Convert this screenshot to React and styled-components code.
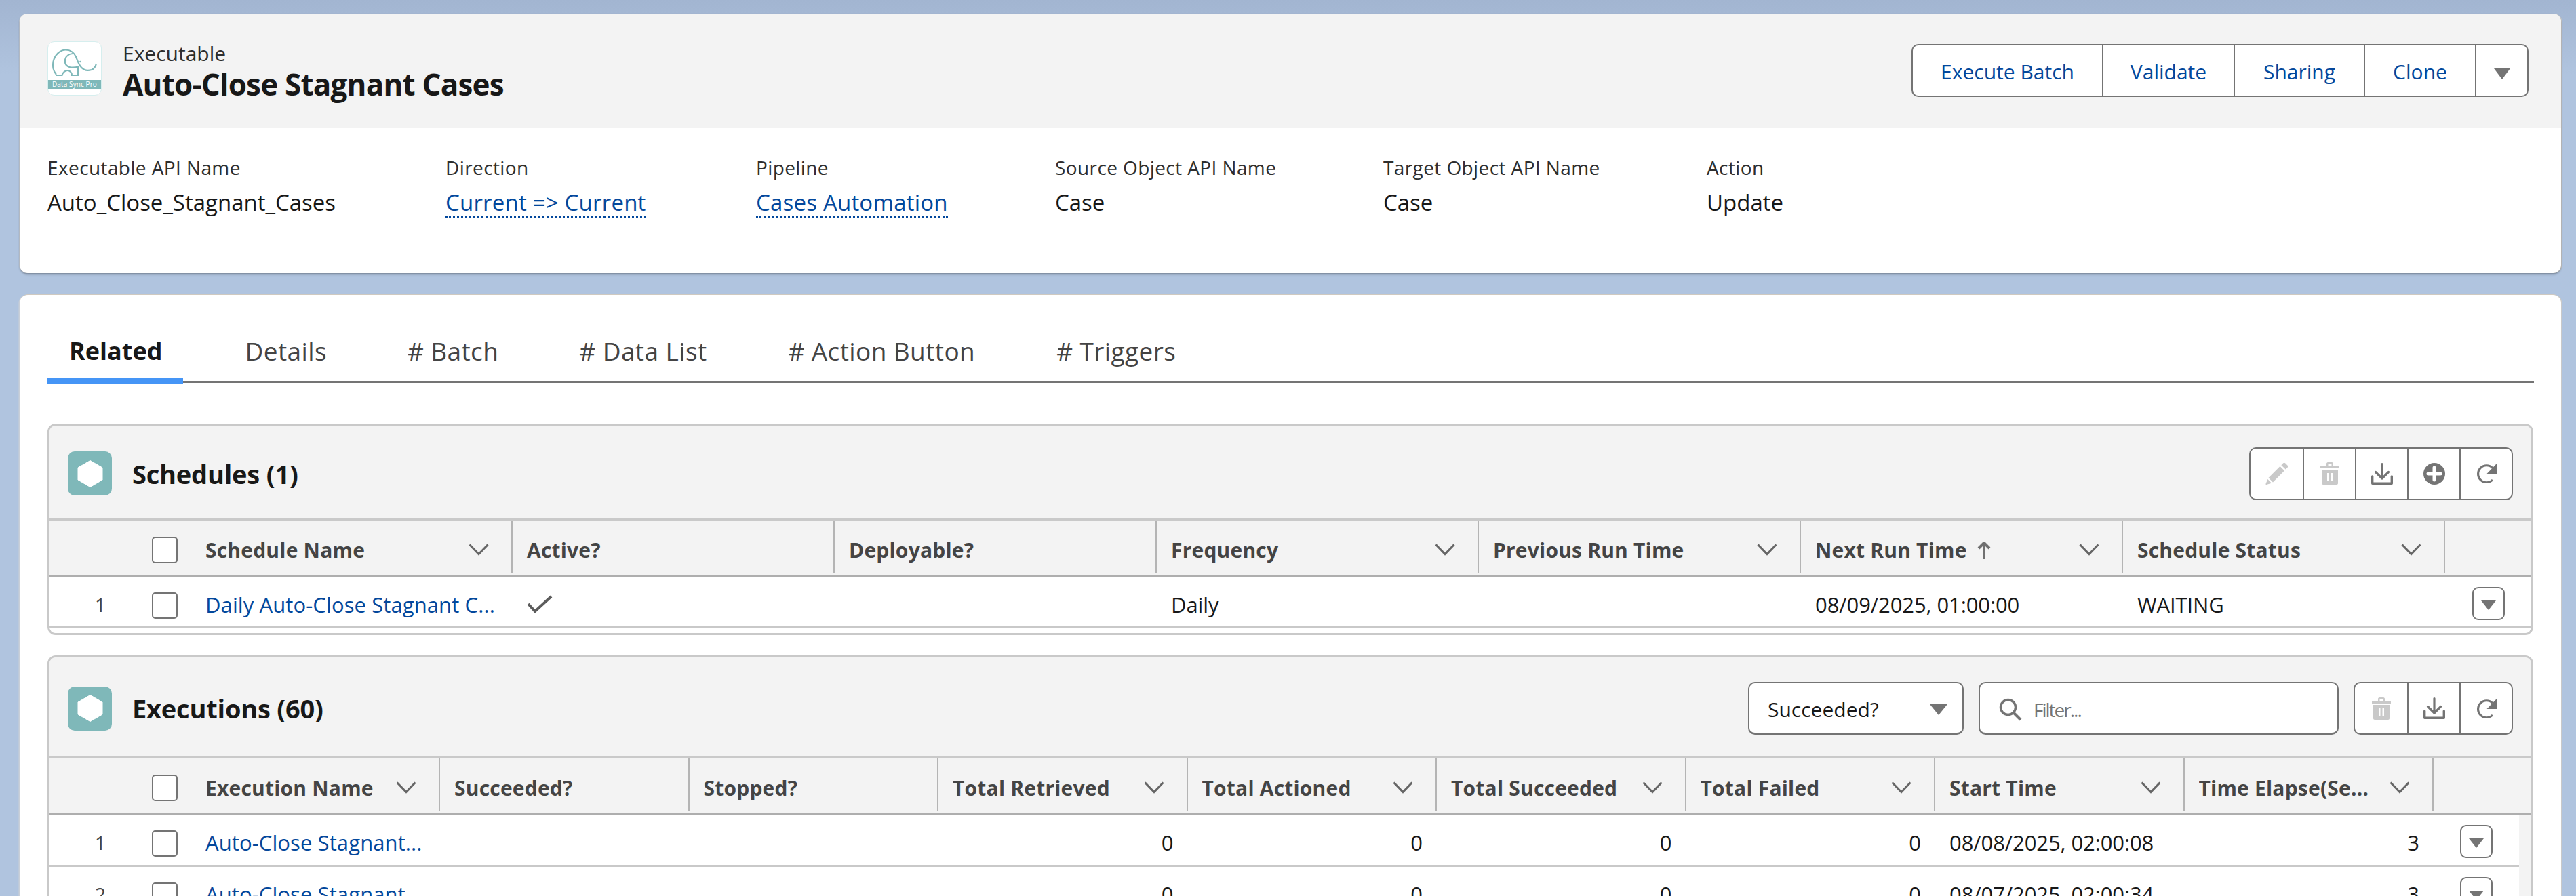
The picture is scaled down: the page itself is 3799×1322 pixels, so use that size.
import React from "react";
import styled, { createGlobalStyle } from "styled-components";

const Global = createGlobalStyle`
  html, body { margin: 0; height: 100%; overflow: hidden; }
  body {
    font-family: "Open Sans", "Noto Sans", "Liberation Sans", sans-serif;
    color: #181818;
    background: linear-gradient(180deg, #a2b5d1 0, #b0c4df 110px, #b0c4df 100%);
  }
  * { box-sizing: border-box; }
`;

const Page = styled.div`
  display: flex; flex-direction: column; gap: 32px;
  padding: 20px 22px 0 29px; height: 1322px; overflow: hidden;
`;
const HeaderCard = styled.section`
  height: 383px; flex: none; background: #fff; border-radius: 12px; overflow: hidden;
  box-shadow: 0 2px 3px rgba(0,0,0,.3), 1.5px 0 0 #c9c9c9, -1px 0 0 #c9cfd8;
`;
const Highlights = styled.div`
  height: 169px; background: #f3f3f3; display: flex; align-items: center;
  justify-content: space-between; padding: 0 48px 2px 41px;
`;
const TitleGroup = styled.div` display: flex; align-items: flex-start; gap: 31px; `;
const LogoBox = styled.div`
  width: 80px; height: 80px; margin-top: 2px; background: #fff; border: 1px solid #d6eeee; border-radius: 10px;
  overflow: hidden; position: relative; flex: none;
`;
const LogoBand = styled.div`
  position: absolute; left: 0; right: 0; top: 56px; height: 13px; background: #7fb8b9; color: #fff;
  font-size: 10px; line-height: 13px; text-align: center; letter-spacing: .1px; font-weight: 500;
`;
const Eyebrow = styled.div` font-size: 30px; line-height: 40px; color: #2e2e2e; `;
const Title = styled.h1` margin: 0; font-size: 44px; line-height: 50px; font-weight: 700; letter-spacing: -.8px; `;
const BtnGroup = styled.div`
  display: flex; height: 78px; border: 2px solid #747474; border-radius: 10px; background: #fff; overflow: hidden;
`;
const GroupBtn = styled.div`
  width: ${p => p.$w}px; flex: none; display: flex; align-items: center; justify-content: center;
  color: #03489c; font-size: 30px; padding-top: 4px;
  & + & { border-left: 2px solid #747474; }
`;
const Caret = styled.span`
  display: inline-block; width: 0; height: 0; flex: none; margin-top: ${p => p.$mt || 0}px;
  border-left: ${p => p.$w / 2}px solid transparent; border-right: ${p => p.$w / 2}px solid transparent;
  border-top: ${p => p.$h}px solid #747474;
`;
const Fields = styled.div` display: flex; padding: 38px 0 0 41px; `;
const Field = styled.div` width: ${p => p.$w}px; flex: none; `;
const FieldLabel = styled.div` font-size: 28px; line-height: 40px; color: #2e2e2e; letter-spacing: .4px; `;
const FieldValue = styled.div` font-size: 33px; line-height: 64px; `;
const FieldLink = styled.span`
  display: inline-block; line-height: 38px; color: #03489c; border-bottom: 3px dotted #03489c; letter-spacing: .2px;
`;
const MainCard = styled.section`
  flex: 1; background: #fff; border-radius: 12px 12px 0 0; padding: 40px 41px 0; min-height: 0; overflow: hidden;
  box-shadow: 0 -1px 0 #cfc9c0, -1.5px 0 0 #c9cfd8, 1.5px 0 0 #c9c9c9;
`;
const Tabs = styled.div` display: flex; height: 90px; border-bottom: 3px solid #747474; margin-right: -1px; `;
const Tab = styled.div`
  height: 91px; padding: 0 31px 0 32px; margin-right: ${p => p.$gap}px; flex: none;
  font-size: ${p => p.$active ? 36 : 37}px; line-height: 86px; letter-spacing: ${p => p.$active ? 0 : .4}px;
  font-weight: ${p => p.$active ? 700 : 400}; color: ${p => p.$active ? "#181818" : "#444"};
  border-bottom: ${p => p.$active ? "8px solid #4595f6" : "none"};
`;
const Panel = styled.div`
  border: 3px solid #c9c9c9; border-radius: 12px; background: #f3f3f3; overflow: hidden; margin-top: ${p => p.$top}px;
  width: 3666px;
`;
const PanelHead = styled.div`
  height: ${p => p.$h}px; background: #f3f3f3; border-bottom: 3px solid #c9c9c9;
  display: flex; align-items: center; justify-content: space-between; padding: 4px 27px 0 27px;
`;
const PanelTitle = styled.div` display: flex; align-items: center; gap: 30px; `;
const TileIcon = styled.div`
  width: 65px; height: 65px; border-radius: 10px; background: #7fb8b9; display: flex; align-items: center; justify-content: center;
`;
const PanelName = styled.h2` margin: 0; font-size: 38px; font-weight: 700; letter-spacing: -.2px; `;
const Tools = styled.div` display: flex; gap: 22px; align-items: center; `;
const IconBtn = styled.div`
  width: ${p => p.$w || 77}px; flex: none; display: flex; align-items: center; justify-content: center;
  & + & { border-left: 2px solid #747474; }
`;
const SelectBox = styled.div`
  width: 318px; height: 78px; border: 2px solid #747474; border-bottom-width: 3px; border-radius: 10px; background: #fff; display: flex;
  align-items: center; justify-content: space-between; padding: 4px 22px 0 27px; font-size: 30px;
`;
const FilterBox = styled.div`
  width: 531px; height: 78px; border: 2px solid #747474; border-bottom-width: 3px; border-radius: 10px; background: #fff; display: flex;
  align-items: center; gap: 17px; padding: 4px 0 0 28px; font-size: 28px; color: #747474; letter-spacing: -2px;
`;
const Row = styled.div`
  display: grid; grid-template-columns: ${p => p.$cols}; align-items: stretch;
  width: ${p => p.$width || "auto"};
`;
const HeadRow = styled(Row)`
  height: 83px; background: #f3f3f3; border-bottom: 3px solid #aeaeae;
`;
const BodyRow = styled(Row)`
  height: ${p => p.$h}px; background: #fff; border-bottom: 3px solid #c9c9c9;
`;
const Th = styled.div`
  display: flex; align-items: center; justify-content: space-between; padding: 9px 33px 0 21px; min-width: 0;
  font-size: 30px; font-weight: 700; color: #444; white-space: nowrap; letter-spacing: .2px;
  &:not(:last-child) { border-right: 2px solid #b4b4b4; margin-bottom: 3px; }
`;
const FirstTh = styled(Th)` padding-left: 0; justify-content: flex-start; `;
const NumBox = styled.div`
  width: 151px; flex: none; text-align: right; padding-right: 68px; font-size: 28px; color: #444;
`;
const Checkbox = styled.span`
  width: 38px; height: 39px; border: 2px solid #747474; border-radius: 5px; background: #fff; flex: none; display: block; margin: ${p => p.$mt || 0}px 41px 0 0;
`;
const ThLabel = styled.span` flex: 1; overflow: hidden; display: flex; align-items: center; gap: 15px; `;
const Td = styled.div`
  display: flex; align-items: center; padding: 8px 21px 0; font-size: 31px; letter-spacing: -.1px; min-width: 0;
  justify-content: ${p => p.$right ? "flex-end" : "flex-start"}; white-space: nowrap;
`;
const FirstTd = styled(Td)` padding-left: 0; `;
const RowLink = styled.span` color: #03489c; letter-spacing: .1px; `;
const MenuBtn = styled.div`
  width: 48px; height: 49px; border: 2px solid #747474; border-radius: 9px; background: #fff;
  display: flex; align-items: center; justify-content: center; padding-top: 5px;
`;
const ActionTd = styled.div` display: flex; align-items: center; justify-content: flex-end; padding: 6px ${p => p.$pad}px 0 0; `;
const Tail = styled.div` height: 7px; background: #fff; `;
const Chevron = () => (
  <svg width="30" height="18" viewBox="0 0 30 18" fill="none" stroke="#666" strokeWidth="3"><path d="M1.500 1.500 15 15.500 28.500 1.500" /></svg>
);
const Hex = () => (
  <svg width="38" height="40" viewBox="0 0 38 40"><path d="M19 0.5 37 11v18L19 39.5 1 29V11z" fill="#fff" stroke="#fff" strokeLinejoin="round" /></svg>
);
const Pencil = () => (
  <svg width="34" height="33" viewBox="0 0 34 33" fill="#c9c9c9"><path d="M26 1.5c1-1 2.4-1 3.4 0l3 3c1 1 1 2.400 0 3.400l-2.700 2.700-6.400-6.400zM21.500 5.900l6.500 6.500L11 29.500 4.500 23zM3.300 25 9 30.700 1.500 33c-.7 0-1.300-.6-1-1.300z" /></svg>
);
const Trash = ({ w = 28, h = 33 }) => (
  <svg width={w} height={h} viewBox="0 0 28 33" fill="#c9c9c9" fillRule="evenodd"><path d="M11 0h6c1 0 2 1 2 2v3h8c.6 0 1 .4 1 1v3H0V6c0-.6.4-1 1-1h8V2c0-1 1-2 2-2zm.5 2.500V5h5V2.500zM2 11h24v20c0 1-1 2-2 2H4c-1 0-2-1-2-2zm8 5v12h2.500V16zm5.500 0v12H18V16z" /></svg>
);
const Download = () => (
  <svg width="32" height="32" viewBox="0 0 32 32" fill="none" stroke="#747474" strokeWidth="3.200" strokeLinecap="round" strokeLinejoin="round">
    <path d="M16 1.600V23M6.500 13.500 16 23l9.500-9.500" />
    <path d="M1.700 20v10.300h28.600V20" strokeWidth="3.400" />
  </svg>
);
const Plus = () => (
  <svg width="32" height="32" viewBox="0 0 32 32"><circle cx="16" cy="16" r="16" fill="#747474" /><path d="M16 7v18M7 16h18" stroke="#fff" strokeWidth="5" strokeLinecap="round" /></svg>
);
const Refresh = () => (
  <svg width="30" height="29" viewBox="0 0 30 29" fill="none"><path d="M24 6.500A12.500 12.500 0 1 0 24 24" stroke="#747474" strokeWidth="3.200" /><path d="M30 0v15H15.500z" fill="#747474" /></svg>
);
const Check = () => (
  <svg width="38" height="27" viewBox="0 0 38 27" fill="none" stroke="#5c5c5c" strokeWidth="4"><path d="M2 13 12 24 36 2" /></svg>
);
const Search = () => (
  <svg width="34" height="34" viewBox="0 0 34 34" fill="none" stroke="#747474" strokeWidth="3.500"><circle cx="13.500" cy="13.500" r="11" /><path d="M21.500 21.500 32 32" strokeWidth="4" /></svg>
);
const UpArrow = () => (
  <svg width="20" height="27" viewBox="0 0 20 27" fill="none" stroke="#707070" strokeWidth="4"><path d="M10 27V3M2 11l8-8 8 8" strokeLinejoin="round" /></svg>
);
const Elephant = () => (
  <svg width="80" height="56" viewBox="0 0 80 56" fill="none" stroke="#7fb8b9" strokeWidth="2.200">
    <path d="M12 48C7 42 6 36 7.500 29 10 18 18 11.500 26 11.500c7 0 12 4 15 10 2 5 4 12 8 16 4 4.500 10 5 15 3.500 4-1.500 6-5 7-9" />
    <path d="M36 17c-5 .5-10 3.500-11 9-1 6 2 10 8 11.500 4 .5 8 0 11-1v12.500h-9c0-4-3-7-6.500-7s-7 3-8 7H12" />
    <circle cx="47.500" cy="29" r="1.300" fill="#7fb8b9" stroke="none" />
  </svg>
);

const s1Cols = "683px repeat(6, 475px) 1fr";
const s2Cols = "576px repeat(8, 367.5px) 1fr";
const s2Heads = ["Succeeded?", "Stopped?", "Total Retrieved", "Total Actioned", "Total Succeeded", "Total Failed", "Start Time", "Time Elapse(Se..."];
const execRows = [
  { n: 1, t: "08/08/2025, 02:00:08" },
  { n: 2, t: "08/07/2025, 02:00:34" },
];

export default function App() {
  return (
    <Page>
      <Global />
      <HeaderCard>
        <Highlights>
          <TitleGroup>
            <LogoBox><Elephant /><LogoBand>Data Sync Pro</LogoBand></LogoBox>
            <div>
              <Eyebrow>Executable</Eyebrow>
              <Title>Auto-Close Stagnant Cases</Title>
            </div>
          </TitleGroup>
          <BtnGroup>
            <GroupBtn $w={279}>Execute Batch</GroupBtn>
            <GroupBtn $w={194}>Validate</GroupBtn>
            <GroupBtn $w={192}>Sharing</GroupBtn>
            <GroupBtn $w={164}>Clone</GroupBtn>
            <GroupBtn $w={77}><Caret $w={25} $h={16} $mt={6} /></GroupBtn>
          </BtnGroup>
        </Highlights>
        <Fields>
          <Field $w={587}><FieldLabel>Executable API Name</FieldLabel><FieldValue>Auto_Close_Stagnant_Cases</FieldValue></Field>
          <Field $w={458}><FieldLabel>Direction</FieldLabel><FieldValue><FieldLink>Current =&gt; Current</FieldLink></FieldValue></Field>
          <Field $w={441}><FieldLabel>Pipeline</FieldLabel><FieldValue><FieldLink>Cases Automation</FieldLink></FieldValue></Field>
          <Field $w={484}><FieldLabel>Source Object API Name</FieldLabel><FieldValue>Case</FieldValue></Field>
          <Field $w={477}><FieldLabel>Target Object API Name</FieldLabel><FieldValue>Case</FieldValue></Field>
          <Field $w={300}><FieldLabel>Action</FieldLabel><FieldValue>Update</FieldValue></Field>
        </Fields>
      </HeaderCard>
      <MainCard>
        <Tabs>
          <Tab $active $gap={59}>Related</Tab>
          <Tab $gap={56}>Details</Tab>
          <Tab $gap={56}>&#35; Batch</Tab>
          <Tab $gap={57}>&#35; Data List</Tab>
          <Tab $gap={57}>&#35; Action Button</Tab>
          <Tab $gap={0}>&#35; Triggers</Tab>
        </Tabs>
        <Panel $top={60}>
          <PanelHead $h={140}>
            <PanelTitle><TileIcon><Hex /></TileIcon><PanelName>Schedules (1)</PanelName></PanelTitle>
            <Tools>
              <BtnGroup>
                <IconBtn><Pencil /></IconBtn>
                <IconBtn><Trash /></IconBtn>
                <IconBtn><Download /></IconBtn>
                <IconBtn><Plus /></IconBtn>
                <IconBtn><Refresh /></IconBtn>
              </BtnGroup>
            </Tools>
          </PanelHead>
          <HeadRow $cols={s1Cols}>
            <FirstTh><NumBox /><Checkbox /><ThLabel>Schedule Name</ThLabel><Chevron /></FirstTh>
            <Th>Active?</Th>
            <Th>Deployable?</Th>
            <Th><ThLabel>Frequency</ThLabel><Chevron /></Th>
            <Th><ThLabel>Previous Run Time</ThLabel><Chevron /></Th>
            <Th><ThLabel>Next Run Time <UpArrow /></ThLabel><Chevron /></Th>
            <Th><ThLabel>Schedule Status</ThLabel><Chevron /></Th>
            <Th />
          </HeadRow>
          <BodyRow $cols={s1Cols} $h={76}>
            <FirstTd><NumBox>1</NumBox><Checkbox $mt={4} /><RowLink>Daily Auto-Close Stagnant C...</RowLink></FirstTd>
            <Td><Check /></Td>
            <Td />
            <Td>Daily</Td>
            <Td />
            <Td>08/09/2025, 01:00:00</Td>
            <Td>WAITING</Td>
            <ActionTd $pad={39}><MenuBtn><Caret $w={22} $h={14} /></MenuBtn></ActionTd>
          </BodyRow>
          <Tail />
        </Panel>
        <Panel $top={30}>
          <PanelHead $h={149}>
            <PanelTitle><TileIcon><Hex /></TileIcon><PanelName>Executions (60)</PanelName></PanelTitle>
            <Tools>
              <SelectBox>Succeeded?<Caret $w={27} $h={16} /></SelectBox>
              <FilterBox><Search />Filter...</FilterBox>
              <BtnGroup>
                <IconBtn><Trash /></IconBtn>
                <IconBtn><Download /></IconBtn>
                <IconBtn><Refresh /></IconBtn>
              </BtnGroup>
            </Tools>
          </PanelHead>
          <HeadRow $cols={s2Cols}>
            <FirstTh><NumBox /><Checkbox /><ThLabel>Execution Name</ThLabel><Chevron /></FirstTh>
            {s2Heads.map((h, i) => (
              <Th key={h}><ThLabel>{h}</ThLabel>{i > 1 && <Chevron />}</Th>
            ))}
            <Th />
          </HeadRow>
          {execRows.map(r => (
            <BodyRow key={r.n} $cols={s2Cols} $h={76.5} $width="3642px">
              <FirstTd><NumBox>{r.n}</NumBox><Checkbox $mt={4} /><RowLink>Auto-Close Stagnant...</RowLink></FirstTd>
              <Td /><Td />
              {[0, 1, 2, 3].map(k => <Td key={k} $right>0</Td>)}
              <Td>{r.t}</Td>
              <Td $right>3</Td>
              <ActionTd $pad={39}><MenuBtn><Caret $w={22} $h={14} /></MenuBtn></ActionTd>
            </BodyRow>
          ))}
        </Panel>
      </MainCard>
    </Page>
  );
}
